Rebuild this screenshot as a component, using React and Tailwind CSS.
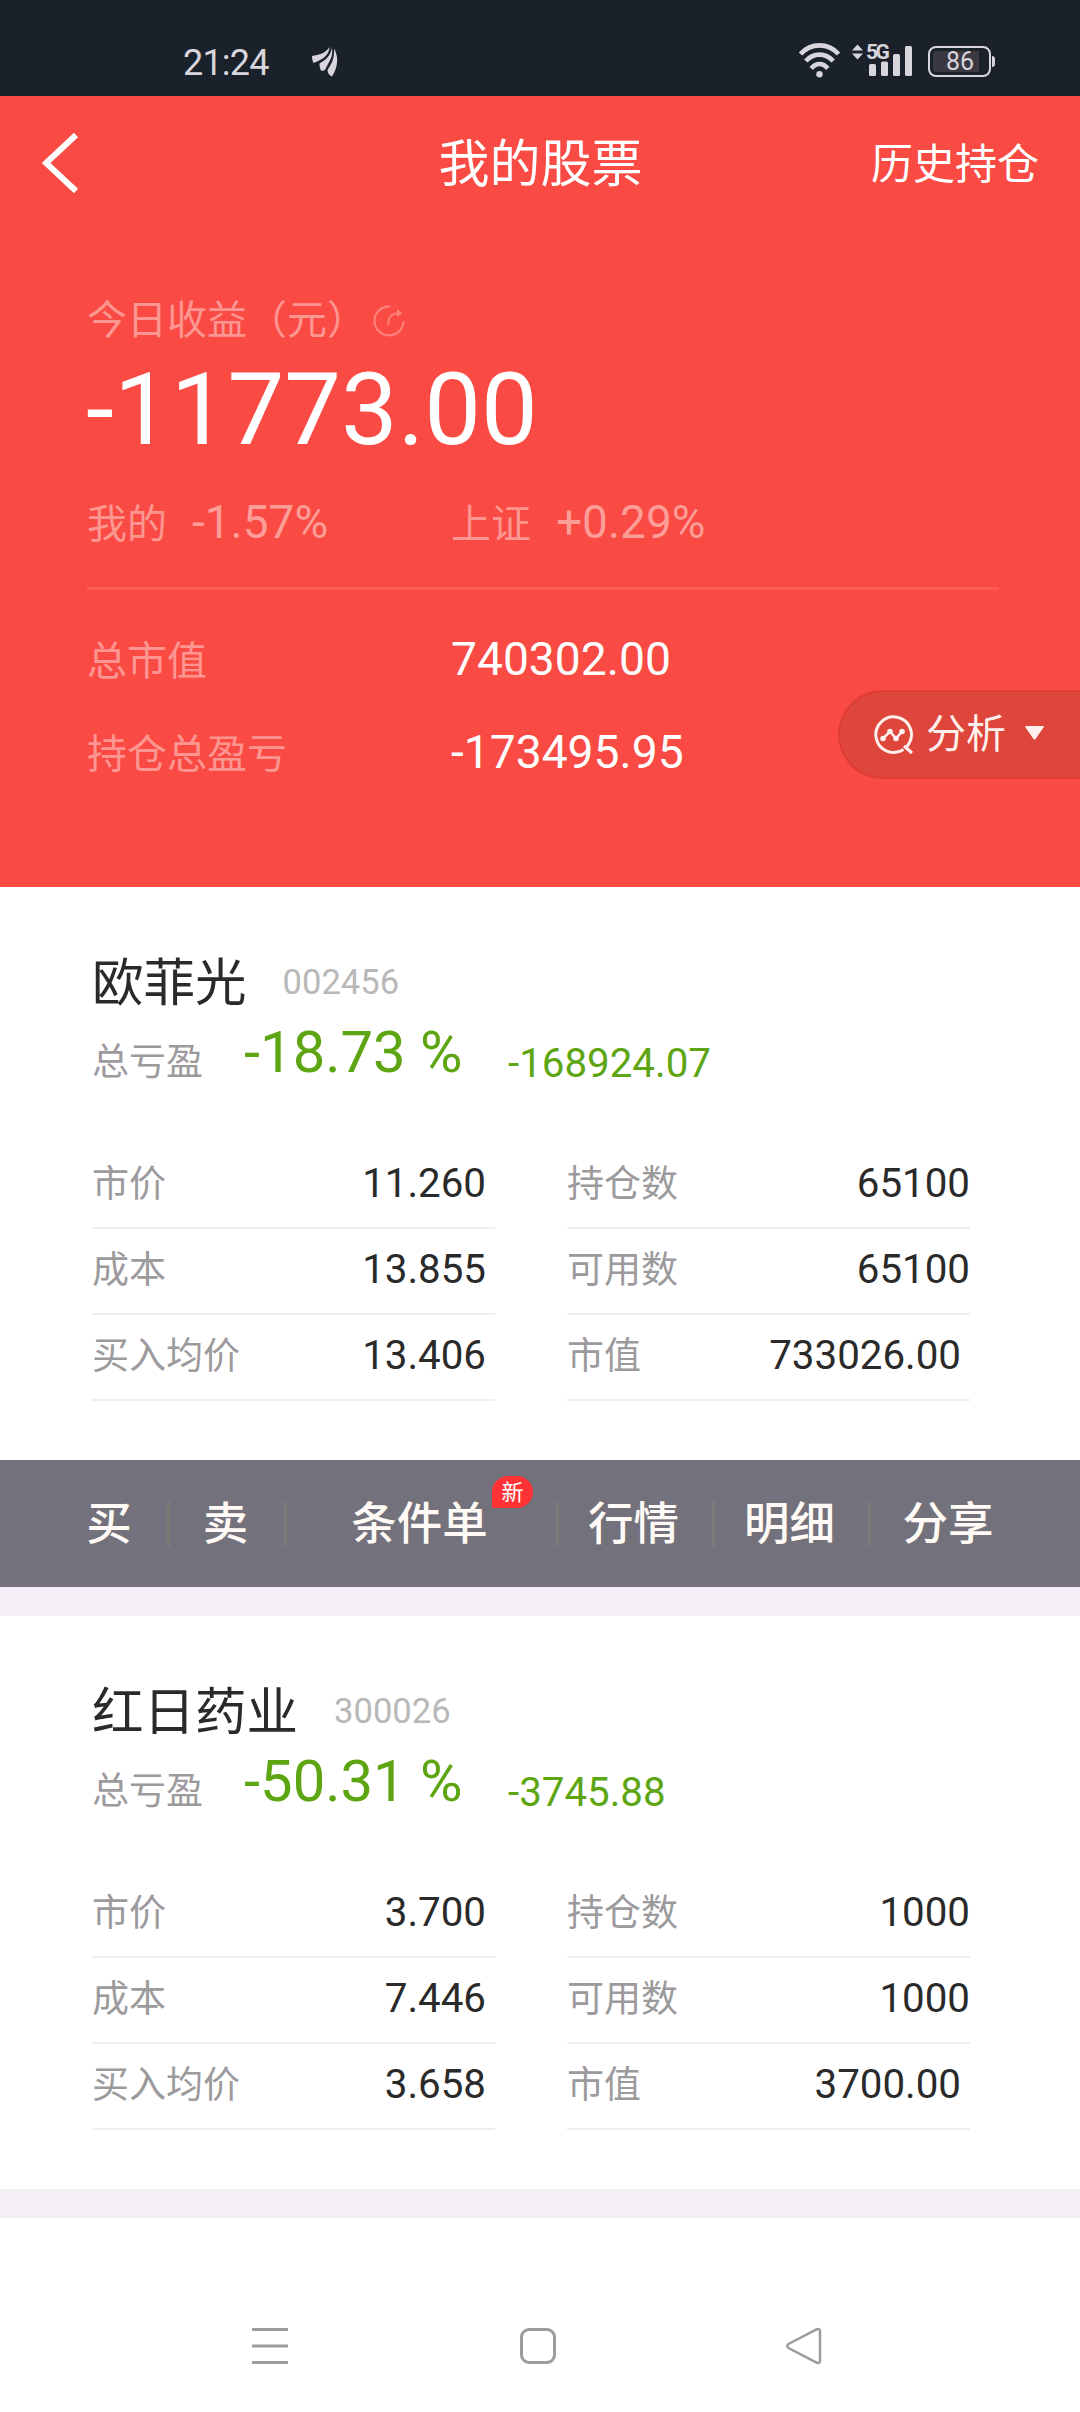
import React from 'react';

const stocks = [
    {
        name: '欧菲光',
        code: '002456',
        percent: '-18.73 %',
        amount: '-168924.07',
        left: [['市价', '11.260'], ['成本', '13.855'], ['买入均价', '13.406']],
        right: [['持仓数', '65100'], ['可用数', '65100'], ['市值', '733026.00']],
    },
    {
        name: '红日药业',
        code: '300026',
        percent: '-50.31 %',
        amount: '-3745.88',
        left: [['市价', '3.700'], ['成本', '7.446'], ['买入均价', '3.658']],
        right: [['持仓数', '1000'], ['可用数', '1000'], ['市值', '3700.00']],
    },
];

function StatusBar() {
    return (
        <div className="flex h-[96px] bg-[#1a212a] pl-[183px] text-[#d8d5dc]">
            <span className="mt-[43px] w-[129px] text-[36px] leading-[40px] tracking-[-0.8px]">21:24</span>
            <svg className="mt-[47px]" width="26" height="30" viewBox="0 0 26 30" fill="currentColor">
                <path d="M0 9C7 8 14 6 17.500 0C17.500 8 10 13 1.500 16C0.500 14 0 11.500 0 9Z" />
                <path d="M7.500 16.500C14 13 19 8 19.800 0.500C22 10 16 16 13 23L9.500 24C8 22 7.500 19.500 7.500 16.500Z" />
                <path d="M22 1.500C27 10 26 20 20 29.500C17.500 28.500 15.500 26 15.500 23C20 16 22.500 12 22 1.500Z" />
            </svg>
            <svg className="mt-[43px] ml-[461px]" width="41" height="35" viewBox="0 0 41 35" fill="none" stroke="currentColor" strokeWidth="4.600">
                <path d="M1.500 11C12 -0.500 29 -0.500 39.500 11" />
                <path d="M6.800 18C14.500 9.500 26.500 9.500 34.200 18" />
                <path d="M12.300 25.500C17 19.500 24 19.500 28.700 25.500" />
                <circle cx="20.500" cy="31.300" r="3.200" fill="currentColor" stroke="none" />
            </svg>
            <div className="relative ml-[12px] w-[62px]">
                <svg className="mt-[44px]" width="62" height="34" viewBox="0 0 62 34" fill="currentColor">
                    <path d="M5.500 0.500L11 6.500H0Z" />
                    <path d="M0 9.500H11L5.500 15.500Z" />
                    <rect x="17" y="20" width="7" height="12" rx="1.500" />
                    <rect x="29" y="17.500" width="7" height="14.500" rx="1.500" />
                    <rect x="41" y="10" width="7" height="22" rx="1.500" />
                    <rect x="53" y="2" width="7" height="30" rx="1.500" />
                </svg>
                <span className="absolute left-[14px] top-[42px] text-[21px] font-bold leading-[20px] tracking-[-2.5px]">5G</span>
            </div>
            <div className="mt-[46px] ml-[14px] flex h-[31px] w-[63px] rounded-[8px] border-2 border-[#d8d5dc] p-[3px]">
                <div className="flex w-[46px] items-center justify-center rounded-l-[3px] bg-[#3a3942] pl-[8px] text-[25px] leading-[20px]">86</div>
            </div>
            <div className="mt-[56px] ml-[1px] h-[11px] w-[3px] rounded-r bg-[#d8d5dc]" />
        </div>
    );
}

function Summary() {
    return (
        <div className="relative h-[791px] bg-[#f94a43] text-white">
            <div className="grid h-[137px] grid-cols-3 items-center pl-[42px] pr-[41px]">
                <svg className="-mt-1" width="38" height="62" viewBox="0 0 38 62" fill="none" stroke="currentColor" strokeWidth="6">
                    <path d="M34 3L4 31L34 59" />
                </svg>
                <h1 className="text-center text-[51px] leading-[51px]">我的股票</h1>
                <span className="text-right text-[42px] leading-[42px]">历史持仓</span>
            </div>

            <div className="pl-[87px] pr-[81px] pt-[68px]">
                <div className="flex h-[40px] items-center text-[40px] leading-[40px] text-[#fd9691]">
                    今日收益（元）
                    <svg className="ml-[6px]" width="32" height="32" viewBox="0 0 32 32" fill="none" stroke="#fd7f79" strokeWidth="2.200">
                        <path d="M17.500 1.500A14.500 14.500 0 1 0 30.500 16" />
                        <path d="M15.500 20C14.500 12 19 8 28 8" />
                        <path d="M24 4L29.500 8L24 12Z" fill="#fd7f79" stroke="none" />
                    </svg>
                </div>
                <div className="-ml-px mt-[19px] text-[101px] leading-[100px]">-11773.00</div>
                <div className="mt-[39px] flex h-[46px] items-baseline text-[46px] leading-[46px] text-[#fd9d98]">
                    <div className="w-[364px]">
                        <span className="mr-[25px] text-[40px] text-[#fd9691]">我的</span>-1.57%
                    </div>
                    <div>
                        <span className="mr-[25px] text-[40px] text-[#fd9691]">上证</span>+0.29%
                    </div>
                </div>
                <div className="mt-[42px] h-[3px] bg-[#ff5b51]" />
                <div className="mt-[46px] flex h-[46px] items-baseline leading-[46px]">
                    <span className="w-[364px] text-[40px] text-[#fd9691]">总市值</span>
                    <span className="text-[46.2px]">740302.00</span>
                </div>
                <div className="mt-[47px] flex h-[46px] items-baseline leading-[46px]">
                    <span className="w-[364px] text-[40px] text-[#fd9691]">持仓总盈亏</span>
                    <span className="text-[46.2px]">-173495.95</span>
                </div>
            </div>

            {/* floating analysis button */}
            <div className="absolute right-0 top-[594px] flex h-[89px] w-[242px] items-center rounded-l-full border-2 border-r-0 border-[#dd3c37] bg-[#de453b] pl-[34px] text-[#fff0ee]">
                <svg width="40" height="40" viewBox="0 0 40 40" fill="none" stroke="currentColor" strokeWidth="3">
                    <path d="M29.500 34.500A17.800 17.800 0 1 1 34.500 29.500L31.500 33" />
                    <path d="M30 31L38 38" />
                    <path d="M9 23.500L16 16.500L22 23.500L28 16.500" strokeWidth="2.500" />
                    <g fill="currentColor" stroke="none">
                        <circle cx="9" cy="23.500" r="2.800" />
                        <circle cx="16" cy="16.500" r="2.800" />
                        <circle cx="22" cy="23.500" r="2.800" />
                        <circle cx="28" cy="16.500" r="2.800" />
                    </g>
                </svg>
                <span className="ml-[12px] text-[40px] leading-[40px]">分析</span>
                <svg className="ml-[19px] -mt-1" width="19" height="14" viewBox="0 0 19 14" fill="currentColor">
                    <path d="M1 0H18Q19.500 0 18.500 1.500L10.500 13Q9.500 14 8.500 13L0.500 1.500Q-0.500 0 1 0Z" />
                </svg>
            </div>
        </div>
    );
}

function Column({ rows }) {
    return (
        <div className="w-[403px]">
            {rows.map(([label, value]) => (
                <div key={label} className="flex h-[86px] items-center justify-between border-b-2 border-[#efefef] pb-[2px]">
                    <span className="text-[37px] leading-[37px] text-[#9c9a9c]">{label}</span>
                    <span className={`text-[40.3px] leading-[40px] text-[#2a2a2a] ${value.includes('.') ? 'pr-[9px]' : ''}`}>{value}</span>
                </div>
            ))}
        </div>
    );
}

function StockCard({ stock }) {
    return (
        <div className="h-[573px] bg-white pl-[92px] pt-[71px]">
            <div className="flex h-[51px] items-center">
                <span className="text-[51.5px] leading-[51px] text-[#2a2a2a]">{stock.name}</span>
                <span className="mb-[3px] ml-[36px] text-[34.6px] leading-[35px] text-[#b8b8b8]">{stock.code}</span>
            </div>
            <div className="mt-[14px] flex h-[58px] items-end text-[#5da512]">
                <span className="w-[152px] text-[37px] leading-[37px] text-[#9c9a9c]">总亏盈</span>
                <span className="w-[264px] text-[58px] leading-[58px]">{stock.percent}</span>
                <span className="text-[40.3px] leading-[35px]">{stock.amount}</span>
            </div>
            <div className="mt-[62px] flex gap-[72px]">
                <Column rows={stock.left} />
                <Column rows={stock.right} />
            </div>
        </div>
    );
}

function Divider() {
    return <div className="h-[46px] w-[3px] bg-[#7b7a75]" />;
}

function Toolbar() {
    return (
        <div className="flex h-[127px] items-center bg-[#73717b] pl-[51px] text-center text-[45.5px] font-medium leading-[45px] text-[#fffaf5]">
            <span className="w-[116px] pt-[2px]">买</span>
            <Divider />
            <span className="w-[114px] pr-[3px] pt-[2px]">卖</span>
            <Divider />
            <div className="relative w-[269px] pr-[4px] pt-[2px]">
                条件单
                <span className="absolute left-[205px] top-[-24px] h-[32px] w-[41px] rounded-full rounded-bl-none bg-[#ff3335] text-[22px] font-normal leading-[34px] text-white">新</span>
            </div>
            <Divider />
            <span className="w-[153px] pr-[4px] pt-[2px]">行情</span>
            <Divider />
            <span className="w-[153px] pr-[4px] pt-[2px]">明细</span>
            <Divider />
            <span className="w-[154px] pt-[2px]">分享</span>
        </div>
    );
}

function NavBar() {
    return (
        <div className="flex h-[194px] items-start bg-white pl-[252px] pt-[109px] text-[#9c9c9c]">
            <svg width="36" height="38" viewBox="0 0 36 38" stroke="currentColor" strokeWidth="3">
                <path d="M0 2.500H36M0 19H36M0 35.500H36" />
            </svg>
            <div className="ml-[232px] mt-px h-[36px] w-[36px] rounded-[9px] border-[3px] border-[#9c9c9c]" />
            <svg className="ml-[229px]" width="37" height="38" viewBox="0 0 37 38" fill="none" stroke="currentColor" strokeWidth="2.500">
                <path d="M3.500 17L31.500 2.500Q35 1 35 4.500V33.500Q35 37 31.500 35.500L3.500 21Q1 19 3.500 17Z" />
            </svg>
        </div>
    );
}

function App() {
    return (
        <div className="h-[2412px] w-[1080px] overflow-hidden bg-white font-['Roboto','Noto_Sans_CJK_SC',sans-serif]">
            <StatusBar />
            <Summary />
            <StockCard stock={stocks[0]} />
            <Toolbar />
            <div className="h-[29px] bg-[#f4eef6]" />
            <StockCard stock={stocks[1]} />
            <div className="h-[29px] bg-[#f4eef6]" />
            <NavBar />
        </div>
    );
}

export default App;
